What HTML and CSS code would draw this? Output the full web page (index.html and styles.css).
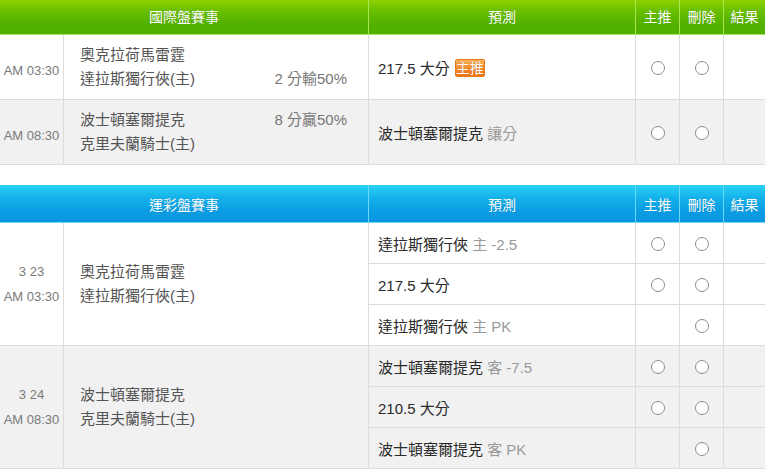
FILE: index.html
```html
<!DOCTYPE html>
<html lang="zh-Hant">
<head>
<meta charset="utf-8">
<title>賽事預測</title>
<link rel="stylesheet" href="styles.css">
</head>
<body>
<div class="board">
  <table class="sheet sheet-intl">
    <colgroup><col class="c-time"><col class="c-match"><col class="c-pred"><col class="c-pick"><col class="c-del"><col class="c-res"></colgroup>
    <thead>
      <tr><th colspan="2">國際盤賽事</th><th>預測</th><th>主推</th><th>刪除</th><th>結果</th></tr>
    </thead>
    <tbody>
      <tr class="game">
        <td class="time time-single">AM 03:30</td>
        <td class="match">
          <div class="team"><span>奧克拉荷馬雷霆</span></div>
          <div class="team"><span>達拉斯獨行俠(主)</span><span class="odds">2 分輸50%</span></div>
        </td>
        <td class="pred">217.5 大分<span class="badge">主推</span></td>
        <td class="pick"><input type="radio" class="radio"></td>
        <td class="pick"><input type="radio" class="radio"></td>
        <td></td>
      </tr>
      <tr class="game alt">
        <td class="time time-single">AM 08:30</td>
        <td class="match">
          <div class="team"><span>波士頓塞爾提克</span><span class="odds">8 分贏50%</span></div>
          <div class="team"><span>克里夫蘭騎士(主)</span></div>
        </td>
        <td class="pred">波士頓塞爾提克 <span class="note">讓分</span></td>
        <td class="pick"><input type="radio" class="radio"></td>
        <td class="pick"><input type="radio" class="radio"></td>
        <td></td>
      </tr>
    </tbody>
  </table>

  <table class="sheet sheet-lottery">
    <colgroup><col class="c-time"><col class="c-match"><col class="c-pred"><col class="c-pick"><col class="c-del"><col class="c-res"></colgroup>
    <thead>
      <tr><th colspan="2">運彩盤賽事</th><th>預測</th><th>主推</th><th>刪除</th><th>結果</th></tr>
    </thead>
    <tbody>
      <tr class="line">
        <td class="time" rowspan="3"><div class="time-line">3 23</div><div class="time-line">AM 03:30</div></td>
        <td class="match" rowspan="3">
          <div class="team"><span>奧克拉荷馬雷霆</span></div>
          <div class="team"><span>達拉斯獨行俠(主)</span></div>
        </td>
        <td class="pred">達拉斯獨行俠 <span class="note">主 -2.5</span></td>
        <td class="pick"><input type="radio" class="radio"></td>
        <td class="pick"><input type="radio" class="radio"></td>
        <td></td>
      </tr>
      <tr class="line">
        <td class="pred">217.5 大分</td>
        <td class="pick"><input type="radio" class="radio"></td>
        <td class="pick"><input type="radio" class="radio"></td>
        <td></td>
      </tr>
      <tr class="line">
        <td class="pred">達拉斯獨行俠 <span class="note">主 PK</span></td>
        <td class="pick"></td>
        <td class="pick"><input type="radio" class="radio"></td>
        <td></td>
      </tr>
      <tr class="line alt">
        <td class="time" rowspan="3"><div class="time-line">3 24</div><div class="time-line">AM 08:30</div></td>
        <td class="match" rowspan="3">
          <div class="team"><span>波士頓塞爾提克</span></div>
          <div class="team"><span>克里夫蘭騎士(主)</span></div>
        </td>
        <td class="pred">波士頓塞爾提克 <span class="note">客 -7.5</span></td>
        <td class="pick"><input type="radio" class="radio"></td>
        <td class="pick"><input type="radio" class="radio"></td>
        <td></td>
      </tr>
      <tr class="line alt">
        <td class="pred">210.5 大分</td>
        <td class="pick"><input type="radio" class="radio"></td>
        <td class="pick"><input type="radio" class="radio"></td>
        <td></td>
      </tr>
      <tr class="line alt">
        <td class="pred">波士頓塞爾提克 <span class="note">客 PK</span></td>
        <td class="pick"></td>
        <td class="pick"><input type="radio" class="radio"></td>
        <td></td>
      </tr>
    </tbody>
  </table>
</div>
</body>
</html>
```

FILE: styles.css
```css
html, body {
  margin: 0;
  padding: 0;
  background: #fff;
}

body {
  font-family: "Liberation Sans", "Noto Sans CJK TC", sans-serif;
  overflow: hidden;
}

.board {
  display: flex;
  flex-direction: column;
  gap: 20px;
  margin-top: -3px;
}

.sheet {
  width: 765px;
  border-collapse: separate;
  border-spacing: 0;
  table-layout: fixed;
}

.c-time { width: 64px; }
.c-match { width: 305px; }
.c-pred { width: 267px; }
.c-pick { width: 44px; }
.c-del { width: 44px; }
.c-res { width: 41px; }

.sheet th {
  box-sizing: border-box;
  height: 38px;
  padding: 0;
  color: #fff;
  font-size: 14px;
  font-weight: normal;
  text-align: center;
  border-right: 1px solid;
  border-bottom: 1px solid;
  text-shadow: 0 0 1px rgba(0, 0, 0, 0.2);
}

.sheet-intl th {
  background: linear-gradient(#9ad800 0%, #6cc000 35%, #54b200 70%, #50af00 100%);
  border-color: #a6e653;
}

.sheet-lottery th {
  background: linear-gradient(#28d3f4 0%, #14b0ea 35%, #0b9de3 70%, #0996e0 100%);
  border-color: #6ed7f6;
}

.sheet td {
  box-sizing: border-box;
  padding: 0;
  border-right: 1px solid #dcdcdc;
  border-bottom: 1px solid #dcdcdc;
  background: #fff;
  vertical-align: middle;
}

.sheet th:last-child,
.sheet td:last-child {
  border-right: 0;
}

.alt td {
  background: #f1f1f1;
}

.game td { height: 65px; }
.line td { height: 41px; }

.time {
  text-align: center;
  color: #7a7a7a;
  font-size: 13px;
}

.time-single {
  padding-top: 7px !important;
}

.time-line {
  line-height: 25px;
}

.match {
  padding: 0 21px 0 16px !important;
  color: #555;
  font-size: 15px;
}

.team {
  display: flex;
  justify-content: space-between;
  line-height: 24px;
}

.odds {
  color: #777;
}

.pred {
  padding-left: 9px !important;
  color: #2a2a2a;
  font-size: 15px;
  white-space: nowrap;
}

.note {
  color: #999;
}

.badge {
  display: inline-block;
  box-sizing: border-box;
  width: 30px;
  height: 18px;
  margin-left: 5px;
  border: 1px solid #e9781c;
  border-radius: 2px;
  background: linear-gradient(#fbb35c, #f58a2a 55%, #ee7414);
  color: #fff;
  font-size: 14px;
  line-height: 16px;
  text-align: center;
  vertical-align: 1px;
  text-shadow: 0 0 1px rgba(150, 60, 0, 0.6);
}

.pick {
  text-align: center;
}

.radio {
  appearance: none;
  -webkit-appearance: none;
  box-sizing: border-box;
  width: 14px;
  height: 14px;
  margin: 0;
  border: 1px solid #8d8d8d;
  border-radius: 50%;
  background: #fff;
  vertical-align: middle;
}
```
